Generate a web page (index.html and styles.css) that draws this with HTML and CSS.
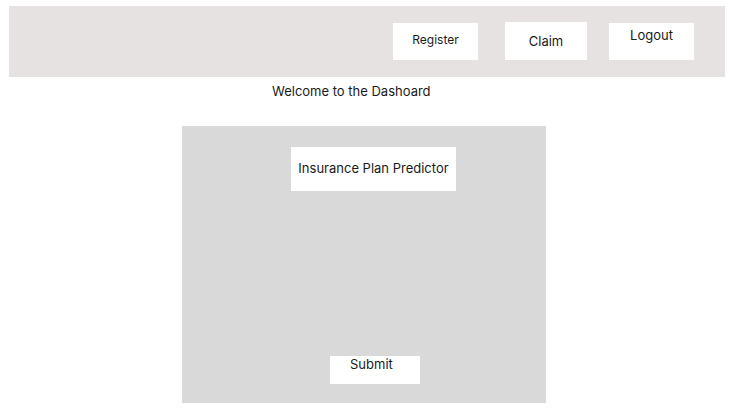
FILE: index.html
```html
<!DOCTYPE html>
<html>
<head>
<meta charset="utf-8">
<link rel="stylesheet" href="styles.css">
</head>
<body>
<header class="topbar">
  <div class="btn btn-register">Register</div>
  <div class="btn btn-claim">Claim</div>
  <div class="btn btn-logout">Logout</div>
</header>
<p class="welcome">Welcome to the Dashoard</p>
<main class="card">
  <div class="card-title">Insurance Plan Predictor</div>
  <div class="submit">Submit</div>
</main>
</body>
</html>
```
FILE: styles.css
```css
html, body {
  margin: 0;
  padding: 0;
  background: #ffffff;
}
body {
  font-family: Inter, "Noto Sans", sans-serif;
  color: #1a1a1a;
  font-size: 13px;
}
.topbar {
  margin: 6px 9px 0 9px;
  height: 71px;
  background: #e6e2e1;
  display: flex;
  align-items: flex-start;
  padding-left: 384px;
  box-sizing: border-box;
}
.btn {
  background: #ffffff;
  display: flex;
  justify-content: center;
  box-sizing: border-box;
  line-height: 16px;
}
.btn-register {
  margin-top: 17px;
  width: 85px;
  height: 37px;
  align-items: center;
  padding-bottom: 3px;
  font-size: 12px;
}
.btn-claim {
  margin-top: 16px;
  margin-left: 27px;
  width: 82px;
  height: 38px;
  align-items: center;
  font-size: 13px;
}
.btn-logout {
  margin-top: 17px;
  margin-left: 22px;
  width: 85px;
  height: 37px;
  padding-top: 4px;
  font-size: 13px;
}
.welcome {
  margin: 6px 0 0 272px;
  font-size: 13px;
  line-height: 16px;
}
.card {
  margin: 27px 0 0 182px;
  width: 364px;
  height: 277px;
  background: #d9d9d9;
  display: flex;
  flex-direction: column;
  align-items: flex-start;
  box-sizing: border-box;
  padding-top: 21px;
}
.card-title {
  margin-left: 109px;
  width: 165px;
  height: 44px;
  background: #ffffff;
  display: flex;
  align-items: center;
  justify-content: center;
  box-sizing: border-box;
  padding-bottom: 3px;
  font-size: 13px;
}
.submit {
  margin-left: 148px;
  margin-top: 165px;
  width: 90px;
  height: 28px;
  background: #ffffff;
  box-sizing: border-box;
  padding: 2px 0 0 20px;
  font-size: 13px;
  line-height: 13px;
}
```
